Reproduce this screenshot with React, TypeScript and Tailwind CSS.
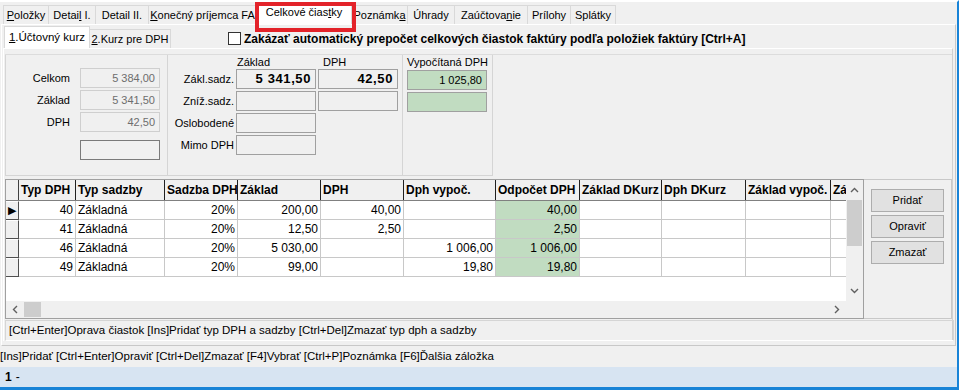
import type { ReactNode } from "react";

const BORDER_TAB = "border-[#d9d9d9]";

function Tab({ label, w, selected }: { label: ReactNode; w: number; selected?: boolean }) {
  if (selected) {
    return (
      <div
        className="h-[22px] bg-white border border-b-0 border-[#d9d9d9] -mr-px flex items-center justify-center pb-[2px] text-[11px] text-black"
        style={{ width: w }}
      >
        {label}
      </div>
    );
  }
  return (
    <div
      className={`h-[19px] border border-b-0 ${BORDER_TAB} -mr-px flex items-center justify-center px-[2px] text-[11px] text-black whitespace-nowrap overflow-hidden`}
      style={{ width: w }}
    >
      {label}
    </div>
  );
}

function Field({ value, w = 80, bold, green, dark, muted }: { value?: string; w?: number; bold?: boolean; green?: boolean; dark?: boolean; muted?: boolean }) {
  return (
    <div
      className={`h-[20px] flex items-center justify-end px-[4px] border ${dark ? "border-[#7a7a7a]" : muted ? "border-[#cfcfcf]" : "border-[#a0a0a0]"} ${green ? "bg-[#c1dcc1]" : "bg-[#f0f0f0]"} ${bold ? "text-[13px] font-bold tracking-[0.6px] text-black" : muted ? "text-[11px] text-[#6d6d6d]" : "text-[11px] text-black"}`}
      style={{ width: w }}
    >
      {value}
    </div>
  );
}

const cols = [
  { h: "Typ DPH", w: 57 },
  { h: "Typ sadzby", w: 89, left: true },
  { h: "Sadzba DPH", w: 73 },
  { h: "Základ", w: 83 },
  { h: "DPH", w: 83 },
  { h: "Dph vypoč.", w: 92 },
  { h: "Odpočet DPH", w: 84, green: true },
  { h: "Základ DKurz", w: 82 },
  { h: "Dph DKurz", w: 84 },
  { h: "Základ vypoč.", w: 85 },
  { h: "Základ", w: 40 },
];

const rows = [
  ["40", "Základná", "20%", "200,00", "40,00", "", "40,00", "", "", "", ""],
  ["41", "Základná", "20%", "12,50", "2,50", "", "2,50", "", "", "", ""],
  ["46", "Základná", "20%", "5 030,00", "", "1 006,00", "1 006,00", "", "", "", ""],
  ["49", "Základná", "20%", "99,00", "", "19,80", "19,80", "", "", "", ""],
];

function Grid() {
  return (
    <div className="w-[859px] h-[140px] border border-[#a0a0a0] flex flex-col bg-[#f0f0f0]">
      <div className="flex h-[121px]">
        <div className="w-[840px] overflow-hidden bg-white flex flex-col">
          {/* header */}
          <div className="flex h-[21px] shrink-0 bg-[#f0f0f0] border-b border-[#808080]">
            <div className="w-[13px] shrink-0 border-r border-[#404040]" />
            {cols.map((c, i) => (
              <div
                key={i}
                className="shrink-0 border-r border-[#202020] flex items-center px-[2px] text-[12px] font-bold text-black whitespace-nowrap overflow-hidden"
                style={{ width: c.w }}
              >
                {c.h}
              </div>
            ))}
          </div>
          {rows.map((r, ri) => (
            <div key={ri} className="flex h-[19px] shrink-0">
              <div className="w-[13px] shrink-0 bg-[#f0f0f0] border-r border-b border-[#505050] border-t border-t-white flex items-center">
                {ri === 0 && <span className="text-[11px] leading-none text-black ml-[2px]">▶</span>}
              </div>
              {cols.map((c, ci) => (
                <div
                  key={ci}
                  className={`shrink-0 border-r border-b border-[#c8c8c8] flex items-center px-[2px] text-[12px] text-black whitespace-nowrap overflow-hidden ${c.left ? "justify-start" : "justify-end"} ${c.green ? "bg-[#c1dcc1]" : ""}`}
                  style={{ width: c.w }}
                >
                  {r[ci]}
                </div>
              ))}
            </div>
          ))}
        </div>
        {/* vertical scrollbar */}
        <div className="w-[17px] bg-[#f0f0f0] flex flex-col items-center">
          <div className="h-[20px] flex items-center justify-center">
            <svg width="9" height="6" viewBox="0 0 9 6"><path d="M1 5 L4.5 1.5 L8 5" stroke="#606060" strokeWidth="1.4" fill="none" /></svg>
          </div>
          <div className="w-[15px] h-[46px] bg-[#cdcdcd]" />
          <div className="flex-1" />
          <div className="h-[20px] flex items-center justify-center">
            <svg width="9" height="6" viewBox="0 0 9 6"><path d="M1 1 L4.5 4.5 L8 1" stroke="#606060" strokeWidth="1.4" fill="none" /></svg>
          </div>
        </div>
      </div>
      {/* horizontal scrollbar */}
      <div className="flex h-[17px]">
        <div className="w-[840px] flex items-center">
          <div className="w-[18px] flex items-center justify-center">
            <svg width="6" height="9" viewBox="0 0 6 9"><path d="M5 1 L1.5 4.5 L5 8" stroke="#606060" strokeWidth="1.4" fill="none" /></svg>
          </div>
          <div className="w-[17px] h-[15px] bg-[#cdcdcd]" />
          <div className="flex-1" />
          <div className="w-[18px] flex items-center justify-center">
            <svg width="6" height="9" viewBox="0 0 6 9"><path d="M1 1 L4.5 4.5 L1 8" stroke="#606060" strokeWidth="1.4" fill="none" /></svg>
          </div>
        </div>
        <div className="w-[17px]" />
      </div>
    </div>
  );
}

function Button({ children }: { children: ReactNode }) {
  return (
    <div className="w-[73px] h-[23px] bg-[#e1e1e1] border border-[#adadad] flex items-center justify-center text-[11px] text-black">
      {children}
    </div>
  );
}

export default function App() {
  return (
    <div className="w-[959px] h-[390px] bg-[#f0f0f0] border-t-2 border-white border-r-2 border-r-[#1883d7] relative overflow-hidden flex flex-col font-['Liberation_Sans',Arial,sans-serif] text-black">
      {/* main tabs */}
      <div className="h-[22px] flex items-end pl-[3px]">
        <Tab w={46} label={<><u>P</u>oložky</>} />
        <Tab w={48} label={<>Detai<u>l</u>&nbsp;I.</>} />
        <Tab w={54} label="Detail II." />
        <Tab w={109} label={<><u>K</u>onečný príjemca FA</>} />
        <Tab w={96} selected label={<>Celkové čias<u>t</u>ky</>} />
        <Tab w={57} label={<>Poznámk<u>a</u></>} />
        <Tab w={48} label="Úhrady" />
        <Tab w={74} label={<>Zaúčtova<u>n</u>ie</>} />
        <Tab w={44} label="Prílohy" />
        <Tab w={46} label="Splátky" />
      </div>

      {/* outer tab panel */}
      <div className="ml-[1px] w-[955px] h-[322px] border-t border-l border-white border-r border-b border-r-[#c8c8c8] border-b-[#c8c8c8] flex flex-col px-[1px]">
        {/* inner tabs + checkbox */}
        <div className="h-[23px] flex items-end pl-[1px]">
          <div className="w-[86px] h-[22px] bg-white border border-b-0 border-[#d9d9d9] -mr-px flex items-center justify-center text-[11.5px] whitespace-nowrap">
            <u>1</u>.Účtovný kurz
          </div>
          <div className="w-[82px] h-[19px] border border-b-0 border-[#d9d9d9] flex items-center justify-center text-[11px] whitespace-nowrap">
            <u>2</u>.Kurz pre DPH
          </div>
          <div className="ml-[57px] self-center mt-[4px] flex items-center gap-[3px]">
            <div className="w-[13px] h-[13px] bg-white border border-[#333333]" />
            <span className="text-[12px] font-bold whitespace-nowrap">
              Zakázať automatický prepočet celkových čiastok faktúry podľa položiek faktúry [Ctrl+A]
            </span>
          </div>
        </div>

        {/* inner panel */}
        <div className="w-[950px] h-[293px] border-t border-l border-white border-r border-r-[#d0d0d0] flex flex-col pl-[1px]">
          {/* upper section */}
          <div className="mt-[5px] h-[123px] flex border-t border-[#dcdcdc]">
            {/* left group */}
            <div className="w-[163px] border-l border-r border-b border-[#d5d5d5] flex flex-col pt-[13px] gap-[2px]">
              {[
                ["Celkom", "5 384,00"],
                ["Základ", "5 341,50"],
                ["DPH", "42,50"],
              ].map(([l, v]) => (
                <div key={l} className="flex items-center h-[20px]">
                  <div className="w-[66px] text-right text-[11px] pr-[2px]">{l}</div>
                  <div className="ml-[8px]">
                    <Field value={v} muted />
                  </div>
                </div>
              ))}
              <div className="ml-[74px] mt-[6px]">
                <Field dark />
              </div>
            </div>
            {/* middle group */}
            <div className="w-[235px] border-r border-b border-[#d5d5d5] flex flex-col">
              <div className="h-[13px] flex items-end text-[11px] leading-none">
                <div className="w-[69px]" />
                <div className="w-[82px]">Základ</div>
                <div className="pl-[4px]">DPH</div>
              </div>
              <div className="flex flex-col gap-[2px] mt-[1px]">
                {[
                  ["Zákl.sadz.", "5 341,50", "42,50"],
                  ["Zníž.sadz.", "", ""],
                  ["Oslobodené", null, null],
                  ["Mimo DPH", null, null],
                ].map(([l, a, b]) => (
                  <div key={l as string} className="flex items-center h-[20px]">
                    <div className="w-[67px] text-right text-[11px] pr-[1px]">{l}</div>
                    <div className="ml-[1px] flex gap-[2px]">
                      <Field value={a ?? ""} bold />
                      {b !== null && <Field value={b} bold />}
                    </div>
                  </div>
                ))}
              </div>
            </div>
            {/* vypocitana */}
            <div className="w-[90px] border-r border-b border-[#d5d5d5] flex flex-col pl-[4px]">
              <div className="h-[13px] flex items-end text-[11px] leading-none">Vypočítaná DPH</div>
              <div className="flex flex-col gap-[2px] mt-[2px]">
                <Field value="1 025,80" green />
                <Field green />
              </div>
            </div>
          </div>

          {/* grid + buttons */}
          <div className="mt-[3px] flex">
            <Grid />
            <div className="w-[90px] h-[140px] border-t border-r border-b border-[#c8c8c8] flex flex-col items-center pt-[9px] gap-[3px]">
              <Button>Pridať</Button>
              <Button>Opraviť</Button>
              <Button>Zmazať</Button>
            </div>
          </div>

          {/* hint */}
          <div className="mt-[1px] w-[949px] h-[21px] border border-[#d5d5d5] border-b-white flex items-center pl-[3px] text-[11.5px] whitespace-nowrap">
            [Ctrl+Enter]Oprava čiastok [Ins]Pridať typ DPH a sadzby [Ctrl+Del]Zmazať typ dph a sadzby
          </div>
        </div>
      </div>

      {/* status hints */}
      <div className="h-[21px] flex items-center text-[11.5px] whitespace-nowrap">
        [Ins]Pridať [Ctrl+Enter]Opraviť [Ctrl+Del]Zmazať [F4]Vybrať [Ctrl+P]Poznámka [F6]Ďalšia záložka
      </div>
      <div className="h-[20px] bg-[#d7e4f2] flex items-center pl-[5px] text-[12px]">
        <span className="font-bold">1</span>
        <span className="ml-[4px]">-</span>
      </div>
      <div className="flex-1 bg-[#1883d7]" />

      {/* red annotation */}
      <div className="absolute left-[255px] top-0 w-[101px] h-[30px] border-4 border-[#e3232a]" />
    </div>
  );
}
